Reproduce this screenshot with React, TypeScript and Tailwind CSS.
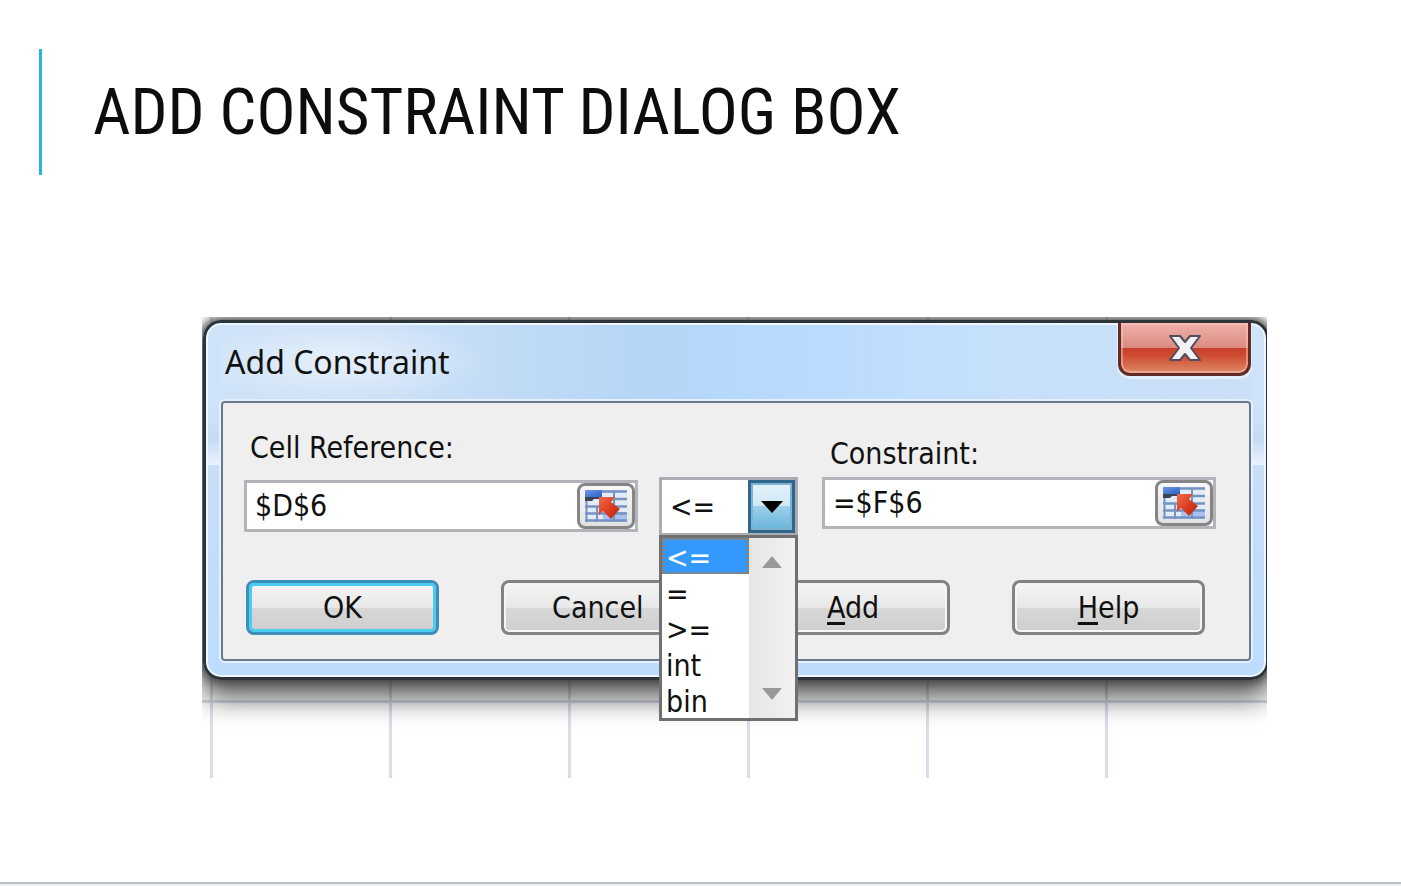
import React, { useState } from "react";

const operators = ["<=", "=", ">=", "int", "bin"];

function RangeIcon() {
  return (
    <svg width="44" height="34" viewBox="0 0 44 34" aria-hidden="true">
      <defs>
        <linearGradient id="range-head" x1="0" y1="0" x2="1" y2="1">
          <stop offset="0" stopColor="#6f97e6" />
          <stop offset="1" stopColor="#2e5fc4" />
        </linearGradient>
        <linearGradient id="range-arrow" x1="0" y1="0" x2="1" y2="1">
          <stop offset="0" stopColor="#f0694a" />
          <stop offset="0.6" stopColor="#d8381c" />
          <stop offset="1" stopColor="#a82812" />
        </linearGradient>
      </defs>
      <rect x="1" y="1" width="42" height="32" fill="#e3ebf7" />
      <rect x="19" y="23" width="24" height="10" fill="#a9c1ee" />
      <path d="M18 2.500H43M18 10H43M1 17.500H43M1 24.500H43M1 31.500H43" stroke="#7592c2" strokeWidth="2.500" />
      <path d="M2.500 11V33M13 17V33M30 1V33" stroke="#7592c2" strokeWidth="2" />
      <rect x="1" y="1" width="17" height="7" fill="url(#range-head)" />
      <path d="M1 8H18V10H10L8 12H1Z" fill="#3b4454" />
      <path d="M15 8H31L27 13L36 20L27 30L19 22L15 26Z" fill="url(#range-arrow)" />
    </svg>
  );
}

function RangeField({ id, value, onChange }: { id: string; value: string; onChange: (v: string) => void }) {
  return (
    <div className="flex h-[52px] items-stretch border-[3px] border-[#b2b4ba] bg-white">
      <input
        id={id}
        value={value}
        onChange={(e) => onChange(e.target.value)}
        className="min-w-0 flex-1 bg-transparent pl-2 outline-none"
      />
      <button
        aria-label="Collapse dialog"
        className="flex w-[58px] items-center justify-center rounded-lg border-[3px] border-[#858585] bg-gradient-to-b from-[#f7f7f7] to-[#e2e2e2]"
      >
        <RangeIcon />
      </button>
    </div>
  );
}

function DialogButton({ children, isDefault = false }: { children: React.ReactNode; isDefault?: boolean }) {
  return (
    <button
      className={`h-[55px] w-[193px] rounded-lg border-[3px] bg-[linear-gradient(#f4f4f4,#e8e8e8_50%,#d8d8d8_50%,#cecece)] ${
        isDefault
          ? "border-[#3f8db9] shadow-[inset_0_0_0_3px_#4bcdf2]"
          : "border-[#828282] shadow-[inset_0_0_0_2px_#f5f5f5]"
      }`}
    >
      {children}
    </button>
  );
}

export default function App() {
  const [cellRef, setCellRef] = useState("$D$6");
  const [constraint, setConstraint] = useState("=$F$6");
  const [operator, setOperator] = useState("<=");

  return (
    <div className="flex min-h-screen flex-col bg-white">
      <header className="mt-[49px] ml-[39px] flex h-[126px] items-center border-l-[3px] border-[#28b2e6] pl-[51px]">
        <h1 className="font-['Roboto_Condensed',sans-serif] text-[65px] leading-none text-[#0d0d0d]">
          ADD CONSTRAINT DIALOG BOX
        </h1>
      </header>

      {/* Worksheet area behind the dialog */}
      <main className="mt-[142px] mr-[134px] ml-[202px] overflow-hidden bg-white pt-[3px] pb-[98px] [background:linear-gradient(#d5dbe8,#d5dbe8)_0_383px/100%_3px_no-repeat,linear-gradient(to_right,#d8dfeb_3px,transparent_3px)_8px_0/179px_100%]">
        <section
          role="dialog"
          aria-labelledby="dialog-title"
          className="mr-[-2px] ml-px rounded-[18px] border-[3px] border-[#2d3439] bg-[linear-gradient(#cfe3f8,#cde3fb_25%,#c6dcf5_33%,#eaf3fd_40%,#c8def7_40%,#bddcfc)] px-[15px] pb-4 font-['DejaVu_Sans_Condensed','Noto_Sans',sans-serif] text-[30px] leading-9 text-[#111] shadow-[inset_0_0_0_2px_#eef6ff,0_0_8px_2px_#444,0_14px_28px_4px_rgba(0,0,0,0.65)]"
        >
          <div className="flex h-[78px] items-start justify-between bg-[radial-gradient(150px_44px_at_120px_38px,#e6f0fb,transparent),linear-gradient(to_right,#cfe3f8,#c8def6_20%,#b4d5f5_42%,#b8daff_55%,#c6e0fb_75%,#cbdff6)] shadow-[inset_0_2px_0_#eef6ff]">
            <h2 id="dialog-title" className="self-center pl-1 font-['Noto_Sans',sans-serif] text-[32px] font-normal">
              Add Constraint
            </h2>
            <button
              aria-label="Close"
              className="flex h-[53px] w-[133px] items-center justify-center rounded-b-xl border-[3px] border-t-0 border-[#612c28] bg-[linear-gradient(#f0b1aa,#dc8b82_49%,#c7402b_50%,#cf4a30_65%,#dd8c6a)] shadow-[inset_0_0_0_2px_rgba(255,200,185,0.5),0_2px_0_1px_#e2eefb]"
            >
              <svg width="34" height="30" viewBox="0 0 34 30" aria-hidden="true">
                <path
                  d="M2 3H12L17 9L22 3H32L23 15L32 27H22L17 21L12 27H2L11 15Z"
                  fill="#f1f1f1"
                  stroke="#4f4e60"
                  strokeWidth="2"
                  strokeLinejoin="round"
                />
              </svg>
            </button>
          </div>

          <div className="rounded-sm border-2 border-[#687a8b] bg-[#efefef] pb-6 shadow-[0_0_0_2px_#e4f0fd]">
            <div className="flex items-start gap-[21px] pr-[33px] pl-[21px]">
              <div className="min-w-0 flex-1 pt-[27px]">
                <label htmlFor="cell-ref" className="mb-[14px] block pl-1.5">
                  Cell Reference:
                </label>
                <RangeField id="cell-ref" value={cellRef} onChange={setCellRef} />
              </div>

              <div className="relative mt-[74px] mr-[3px] flex h-[59px] w-[139px] border-[3px] border-[#abadb3] bg-white">
                <select
                  aria-label="Operator"
                  value={operator}
                  onChange={(e) => setOperator(e.target.value)}
                  className="min-w-0 flex-1 appearance-none bg-white pl-2 outline-none"
                >
                  {operators.map((op) => (
                    <option key={op}>{op}</option>
                  ))}
                </select>
                <button
                  aria-label="Show operators"
                  className="flex w-[47px] items-center justify-center border-[3px] border-[#2f668e] bg-[linear-gradient(#e4f2fb,#cfe8f6_49%,#9bd0ea_50%,#69b3da)] shadow-[inset_0_0_0_2px_#7fb2d0]"
                >
                  <svg width="22" height="12" viewBox="0 0 22 12" aria-hidden="true">
                    <path d="M0 0H22L11 12Z" fill="#000" />
                  </svg>
                </button>

                {/* Open list, drawn over the buttons */}
                <div className="absolute top-[55px] -right-[3px] -left-[3px] z-10 flex border-[3px] border-[#707070] bg-white">
                  <ul role="listbox" aria-label="Operators" className="flex-1 leading-10">
                    {operators.map((op) => (
                      <li
                        key={op}
                        role="option"
                        aria-selected={op === operator}
                        onClick={() => setOperator(op)}
                        className={`h-9 pl-1 ${
                          op === operator ? "bg-[#3399ff] text-white outline-2 -outline-offset-2 outline-dotted outline-[#c0722c]" : ""
                        }`}
                      >
                        {op}
                      </li>
                    ))}
                  </ul>
                  <div className="flex w-[46px] flex-col items-center justify-between bg-gradient-to-r from-[#e6e6e6] to-[#f2f2f2] py-[18px]">
                    <svg width="20" height="12" viewBox="0 0 20 12" aria-hidden="true">
                      <path d="M0 12H20L10 0Z" fill="#989898" />
                    </svg>
                    <svg width="20" height="12" viewBox="0 0 20 12" aria-hidden="true">
                      <path d="M0 0H20L10 12Z" fill="#989898" />
                    </svg>
                  </div>
                </div>
              </div>

              <div className="min-w-0 flex-1 pt-[33px]">
                <label htmlFor="constraint" className="mb-[5px] block pl-2">
                  Constraint:
                </label>
                <RangeField id="constraint" value={constraint} onChange={setConstraint} />
              </div>
            </div>

            <div className="mt-11 flex justify-between pr-11 pl-[23px]">
              <DialogButton isDefault>OK</DialogButton>
              <DialogButton>Cancel</DialogButton>
              <DialogButton>
                <span className="underline underline-offset-4">A</span>dd
              </DialogButton>
              <DialogButton>
                <span className="underline underline-offset-4">H</span>elp
              </DialogButton>
            </div>
          </div>
        </section>
      </main>

      <footer className="mt-auto h-1 border-t-2 border-[#bbc0c4] bg-[#f0f0f0]" />
    </div>
  );
}
